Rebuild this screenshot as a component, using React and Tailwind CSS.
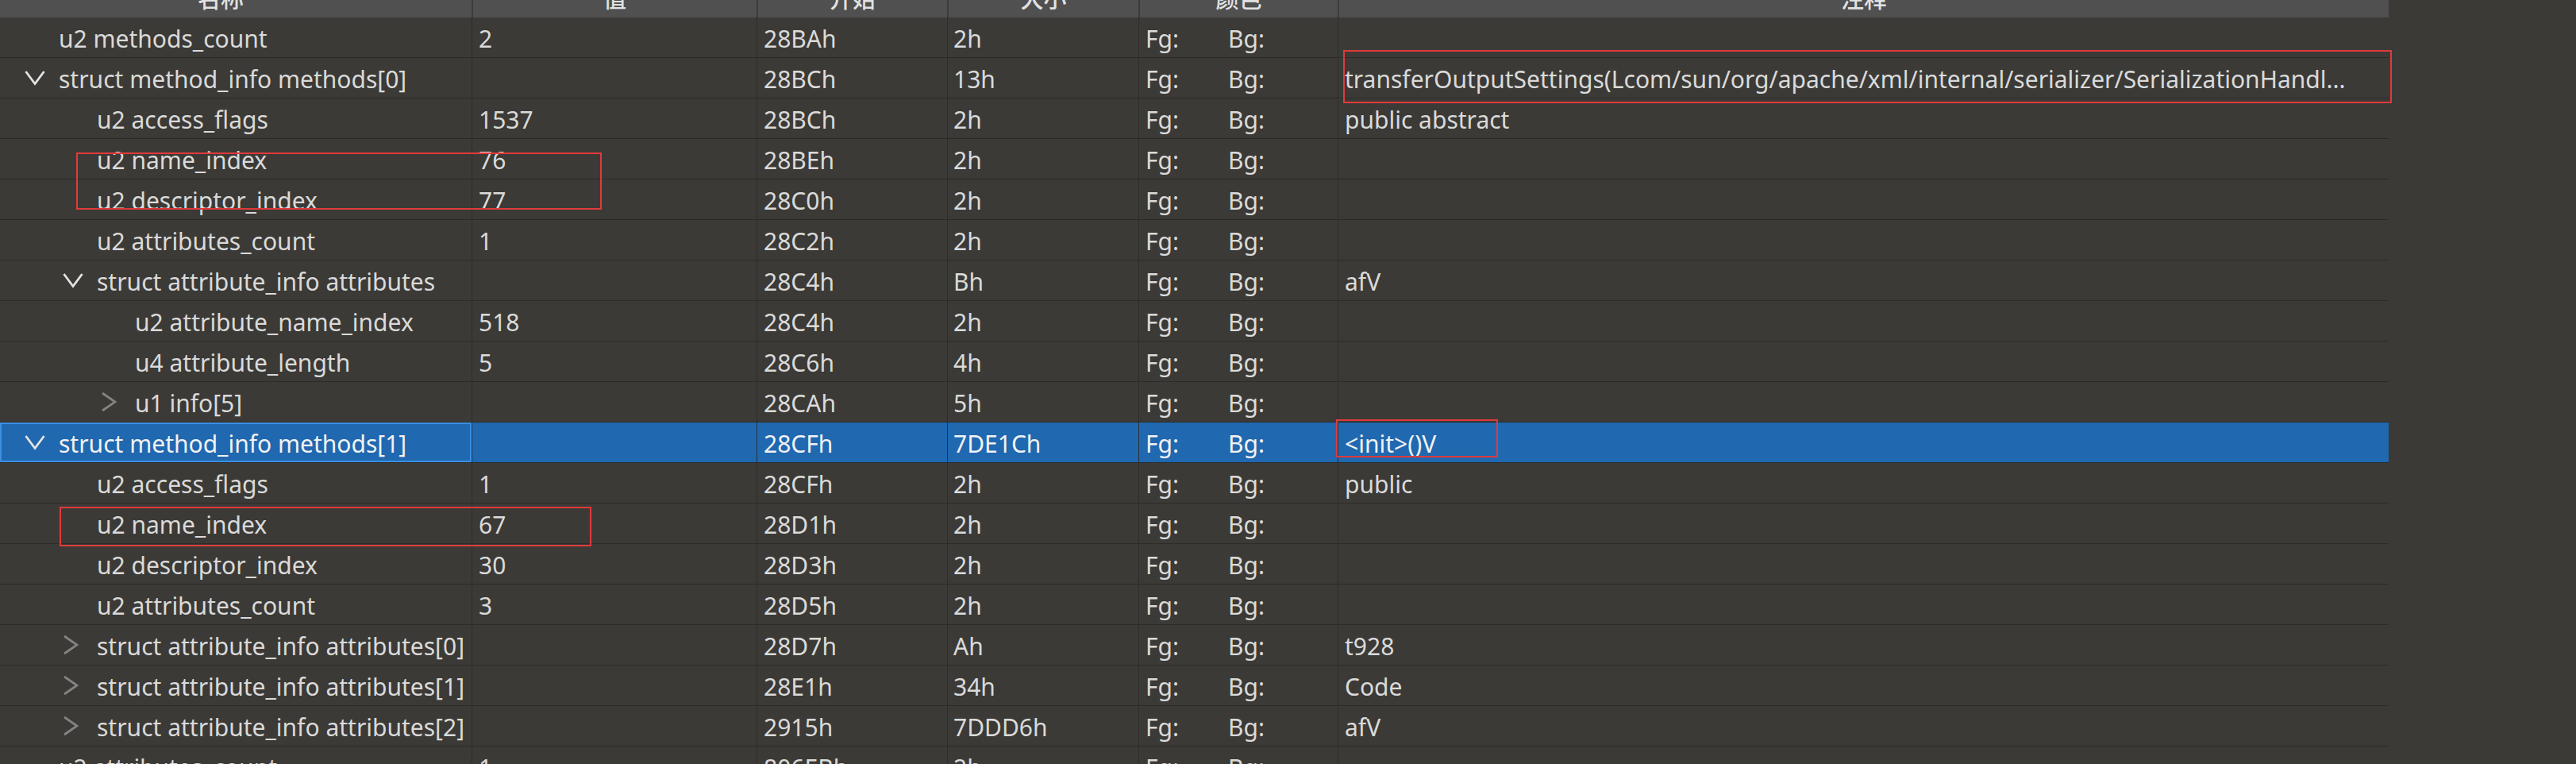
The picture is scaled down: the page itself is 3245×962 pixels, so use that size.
import React from 'react';

const rows = [
  { level: 0, name: 'u2 methods_count', value: '2', start: '28BAh', size: '2h', note: '' },
  { level: 0, chevron: 'down', name: 'struct method_info methods[0]', value: '', start: '28BCh', size: '13h', note: 'transferOutputSettings(Lcom/sun/org/apache/xml/internal/serializer/SerializationHandl...' },
  { level: 1, name: 'u2 access_flags', value: '1537', start: '28BCh', size: '2h', note: 'public abstract' },
  { level: 1, name: 'u2 name_index', value: '76', start: '28BEh', size: '2h', note: '' },
  { level: 1, name: 'u2 descriptor_index', value: '77', start: '28C0h', size: '2h', note: '' },
  { level: 1, name: 'u2 attributes_count', value: '1', start: '28C2h', size: '2h', note: '' },
  { level: 1, chevron: 'down', name: 'struct attribute_info attributes', value: '', start: '28C4h', size: 'Bh', note: 'afV' },
  { level: 2, name: 'u2 attribute_name_index', value: '518', start: '28C4h', size: '2h', note: '' },
  { level: 2, name: 'u4 attribute_length', value: '5', start: '28C6h', size: '4h', note: '' },
  { level: 2, chevron: 'right', name: 'u1 info[5]', value: '', start: '28CAh', size: '5h', note: '' },
  { level: 0, chevron: 'down', selected: true, name: 'struct method_info methods[1]', value: '', start: '28CFh', size: '7DE1Ch', note: '<init>()V' },
  { level: 1, name: 'u2 access_flags', value: '1', start: '28CFh', size: '2h', note: 'public' },
  { level: 1, name: 'u2 name_index', value: '67', start: '28D1h', size: '2h', note: '' },
  { level: 1, name: 'u2 descriptor_index', value: '30', start: '28D3h', size: '2h', note: '' },
  { level: 1, name: 'u2 attributes_count', value: '3', start: '28D5h', size: '2h', note: '' },
  { level: 1, chevron: 'right', name: 'struct attribute_info attributes[0]', value: '', start: '28D7h', size: 'Ah', note: 't928' },
  { level: 1, chevron: 'right', name: 'struct attribute_info attributes[1]', value: '', start: '28E1h', size: '34h', note: 'Code' },
  { level: 1, chevron: 'right', name: 'struct attribute_info attributes[2]', value: '', start: '2915h', size: '7DDD6h', note: 'afV' },
  { level: 0, name: 'u2 attributes_count', value: '1', start: '806EBh', size: '2h', note: '' },
];

const indent = ['pl-[31px]', 'pl-[79px]', 'pl-[127px]'];

// red boxes drawn on top of the screenshot
const marks = [
  'left-[1692px] top-[63px] w-[1321px] h-[67px]',
  'left-[96px] top-[192px] w-[662px] h-[72px]',
  'left-[1683px] top-[528px] w-[204px] h-[48px]',
  'left-[75px] top-[638px] w-[670px] h-[50px]',
];

const grid = 'grid grid-cols-[594px_359px_240px_241px_251px_1324px] w-[3009px]';

function Chevron({ dir }) {
  if (dir === 'down') {
    return (
      <svg width="26" height="20" viewBox="0 0 26 20">
        <polyline points="1.5,2 13,17.5 24.5,2" fill="none" stroke="#e4e4e4" strokeWidth="2.8" />
      </svg>
    );
  }
  if (dir === 'right') {
    return (
      <svg width="20" height="26" viewBox="0 0 20 26">
        <polyline points="2,2 18,13 2,24" fill="none" stroke="#838383" strokeWidth="2.8" />
      </svg>
    );
  }
  return null;
}

function HeaderCell({ label, first }) {
  return (
    <div className={`h-[22px] overflow-hidden flex justify-center ${first ? 'pr-[38px]' : 'border-l-2 border-[#3b3b3b]'}`}>
      <span className="block text-[29px] leading-[29px] -mt-[16px] font-medium text-[#e2e2e2]">{label}</span>
    </div>
  );
}

function Row({ row }) {
  const cell = 'h-[50px] overflow-hidden whitespace-nowrap pt-[4px] leading-[46px]';
  const sep = row.selected ? 'border-l border-[#2a2f36]' : 'border-l border-[#2e2d2a]';
  return (
    <div className={`${grid} h-[51px] border-b border-[#2c2b28] ${row.selected ? 'bg-[#2068b0] text-[#f2f2f2]' : 'text-[#dadada]'}`}>
      <div className={`${cell} ${indent[row.level]} flex ${row.selected ? 'ring-2 ring-inset ring-[#3d8fe2]' : ''}`}>
        <div className="w-[43px] shrink-0 flex items-center -mt-[4px]">
          <Chevron dir={row.chevron} />
        </div>
        <span>{row.name}</span>
      </div>
      <div className={`${cell} ${sep} pl-[8px]`}>{row.value}</div>
      <div className={`${cell} ${sep} pl-[8px]`}>{row.start}</div>
      <div className={`${cell} ${sep} pl-[7px]`}>{row.size}</div>
      <div className={`${cell} ${sep} pl-[8px] flex`}>
        <span className="w-[104px]">Fg:</span>
        <span>Bg:</span>
      </div>
      <div className={`${cell} ${sep} pl-[8px]`}>{row.note}</div>
    </div>
  );
}

export default function App() {
  return (
    <div
      className="relative w-[3245px] h-[962px] overflow-hidden bg-[#3c3a36] text-[30px]"
      style={{ fontFamily: '"Noto Sans", "Noto Sans CJK SC", sans-serif' }}
    >
      <div className={`${grid} bg-[#505050]`}>
        <HeaderCell label="名称" first />
        <HeaderCell label="值" />
        <HeaderCell label="开始" />
        <HeaderCell label="大小" />
        <HeaderCell label="颜色" />
        <HeaderCell label="注释" />
      </div>
      <div className="flex flex-col">
        {rows.map((row, i) => (
          <Row key={i} row={row} />
        ))}
      </div>
      {marks.map((m) => (
        <div key={m} className={`absolute ${m} border-2 border-[#e03a3c] pointer-events-none`} />
      ))}
    </div>
  );
}
